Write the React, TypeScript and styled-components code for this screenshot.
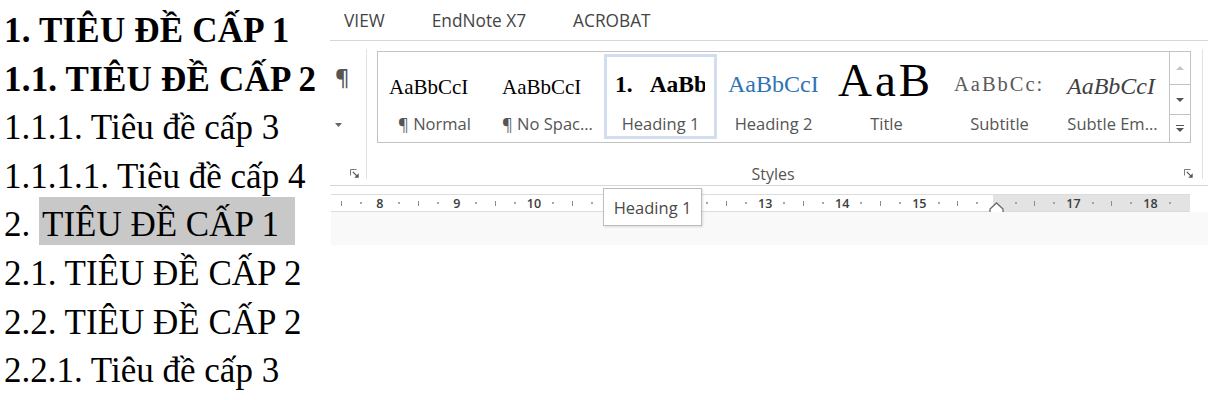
import React from 'react';
import styled, { createGlobalStyle, css } from 'styled-components';

const Global = createGlobalStyle`
  html, body { margin: 0; padding: 0; background: #fff; }
  body { width: 1208px; height: 400px; overflow: hidden; }
`;

const Page = styled.div`
  display: flex;
  align-items: flex-start;
  width: 1208px;
  height: 400px;
`;

/* ---------- document text ---------- */
const Doc = styled.div`
  width: 330px;
  flex: none;
  box-sizing: border-box;
  padding: 7px 0 0 4px;
  font-family: "Liberation Serif", "Times New Roman", serif;
  font-size: 35px;
  line-height: 48.6px;
  color: #000;
`;

const DocLine = styled.div<{ $bold?: boolean }>`
  white-space: nowrap;
  font-weight: ${(p) => (p.$bold ? 700 : 400)};
  letter-spacing: ${(p) => (p.$bold ? '0.2px' : '0')};
`;

const Highlight = styled.span`
  background: #c8c8c8;
  padding: 8px 16px 1px 3px;
`;

/* ---------- ribbon screenshot ---------- */
const Shot = styled.div`
  position: relative;
  width: 878px;
  flex: none;
  display: flex;
  flex-direction: column;
  font-family: "Open Sans", "Segoe UI", sans-serif;
  color: #444;
  background: #fff;
`;

const Tabs = styled.div`
  height: 41px;
  box-sizing: border-box;
  padding: 2px 0 0 14px;
  border-bottom: 1px solid #d6d6d6;
  display: flex;
  align-items: center;
  gap: 47px;
`;

const Tab = styled.span`
  font-size: 17.3px;
  line-height: 22px;
  color: #444;
  white-space: nowrap;
`;

const Ribbon = styled.div`
  height: 145px;
  box-sizing: border-box;
  border-bottom: 1px solid #d6d6d6;
  display: flex;
`;

const ParaGroup = styled.div`
  width: 36px;
  flex: none;
  display: flex;
  flex-direction: column;
`;

const Pilcrow = styled.div`
  height: 70px;
  box-sizing: border-box;
  padding-left: 5px;
  display: flex;
  align-items: center;
  font-size: 22px;
  font-weight: 600;
  color: #555;
  line-height: 1;
`;

const ArrowRow = styled.div`
  height: 28px;
  box-sizing: border-box;
  padding-left: 5px;
  display: flex;
  align-items: center;
`;

const LauncherRow = styled.div`
  box-sizing: border-box;
  padding: 30px 0 0 20px;
  display: flex;
  align-items: flex-start;
`;

const Sep = styled.div`
  width: 1px;
  flex: none;
  margin: 8px 0 6px;
  background: #e2e2e2;
`;

const StylesGroup = styled.div`
  width: 835px;
  flex: none;
  box-sizing: border-box;
  padding: 10px 0 0 10px;
  display: flex;
  flex-direction: column;
`;

const Gallery = styled.div`
  width: 814px;
  height: 92px;
  box-sizing: border-box;
  border: 1px solid #c3c3c3;
  display: flex;
`;

const Items = styled.div`
  display: flex;
  width: 791px;
  flex: none;
`;

const Item = styled.div<{ $selected?: boolean }>`
  width: 113px;
  height: 85px;
  flex: none;
  margin-top: 2px;
  box-sizing: border-box;
  border: 3px solid ${(p) => (p.$selected ? '#d2ddef' : 'transparent')};
  display: flex;
  flex-direction: column;
`;

const PreviewBox = styled.div`
  width: 98px;
  height: 50px;
  margin-top: 4px;
  box-sizing: border-box;
  padding-left: 8px;
  overflow: hidden;
  white-space: nowrap;
  font-family: "Liberation Serif", "Times New Roman", serif;
  font-size: 21px;
  line-height: 50px;
`;

type Variant = 'normal' | 'h1' | 'h2' | 'title' | 'subtitle' | 'subtle';

const variantCss: Record<Variant, ReturnType<typeof css>> = {
  normal: css`
    font-size: 21px;
    color: #000;
    vertical-align: -1px;
  `,
  h1: css`
    font-size: 23.5px;
    font-weight: 700;
    color: #000;
    vertical-align: 1px;
  `,
  h2: css`
    font-size: 24px;
    color: #2e74b5;
    vertical-align: 1px;
  `,
  title: css`
    font-size: 47px;
    letter-spacing: 3px;
    margin-left: -3px;
    color: #000;
    vertical-align: -3px;
  `,
  subtitle: css`
    font-size: 20.5px;
    letter-spacing: 2px;
    color: #5a5a5a;
    vertical-align: 2px;
  `,
  subtle: css`
    font-size: 24px;
    font-style: italic;
    color: #404040;
    vertical-align: -1px;
  `,
};

const Preview = styled.span<{ $v: Variant }>`
  line-height: 0;
  ${(p) => variantCss[p.$v]}
`;

const NumGap = styled.span`
  display: inline-block;
  width: 17px;
`;

const ItemLabel = styled.div`
  margin-top: 2px;
  height: 22px;
  line-height: 22px;
  font-size: 16.5px;
  color: #555;
  text-align: center;
  white-space: nowrap;
  overflow: hidden;
`;

const ScrollCol = styled.div`
  width: 21px;
  flex: none;
  box-sizing: border-box;
  border-left: 1px solid #c3c3c3;
  display: flex;
  flex-direction: column;
`;

const ScrollBtn = styled.div<{ $h: number; $last?: boolean }>`
  height: ${(p) => p.$h}px;
  flex: none;
  box-sizing: border-box;
  border-bottom: ${(p) => (p.$last ? 'none' : '1px solid #c3c3c3')};
  display: flex;
  align-items: center;
  justify-content: center;
`;

const GroupFooter = styled.div`
  display: flex;
  align-items: center;
  height: 42px;
  padding-top: 19px;
  box-sizing: border-box;
`;

const GroupLabel = styled.div`
  width: 792px;
  flex: none;
  text-align: center;
  font-size: 16px;
  line-height: 20px;
  color: #555;
`;

const FooterLauncher = styled.div`
  padding-left: 15px;
  display: flex;
  align-items: center;
`;

/* ---------- ruler ---------- */
const RulerArea = styled.div`
  display: flex;
  flex-direction: column;
  padding-top: 8px;
`;

const RulerBar = styled.div`
  width: 859px;
  height: 18px;
  margin-left: 1px;
  box-sizing: border-box;
  padding-left: 0.7px;
  border-top: 1px solid #dcdcdc;
  border-bottom: 1px solid #dcdcdc;
  background: linear-gradient(to right, #fff 662px, #e3e3e3 662px);
  display: flex;
  align-items: stretch;
`;

const Mark = styled.div<{ $top?: boolean }>`
  width: 19.28px;
  flex: none;
  display: flex;
  justify-content: center;
  align-items: ${(p) => (p.$top ? 'flex-start' : 'center')};
`;

const Tick = styled.span`
  width: 1px;
  height: 5px;
  background: #8c8c8c;
`;

const Dot = styled.span`
  width: 2px;
  height: 2px;
  background: #a6a6a6;
`;

const Num = styled.span`
  font-size: 12.5px;
  line-height: 15px;
  font-weight: 600;
  color: #3c3c3c;
`;

const Marker = styled.svg`
  margin-top: 7px;
  flex: none;
`;

const BelowRuler = styled.div`
  height: 33px;
  margin-left: 1px;
  background: #f9f9f9;
`;

const Tooltip = styled.div`
  position: absolute;
  left: 273px;
  top: 188px;
  width: 99px;
  height: 38px;
  box-sizing: border-box;
  border: 1px solid #bdbdbd;
  background: #fff;
  box-shadow: 1px 1px 2px rgba(0, 0, 0, 0.12);
  display: flex;
  align-items: center;
  justify-content: center;
  font-size: 16.5px;
  color: #4a4a4a;
  white-space: nowrap;
`;

const Launcher = () => (
  <svg width="9" height="9" viewBox="0 0 9 9">
    <path d="M0.5 6.5V0.5H6.5" stroke="#7a7a7a" fill="none" />
    <path d="M2.8 2.8L6.8 6.8" stroke="#555" strokeWidth="1.2" />
    <path d="M8.7 4.3V8.7H4.3Z" fill="#555" />
  </svg>
);

const styles: { label: string; v: Variant; text: string; selected?: boolean }[] = [
  { label: '¶ Normal', v: 'normal', text: 'AaBbCcI' },
  { label: '¶ No Spac...', v: 'normal', text: 'AaBbCcI' },
  { label: 'Heading 1', v: 'h1', text: 'AaBb', selected: true },
  { label: 'Heading 2', v: 'h2', text: 'AaBbCcI' },
  { label: 'Title', v: 'title', text: 'AaB' },
  { label: 'Subtitle', v: 'subtitle', text: 'AaBbCc:' },
  { label: 'Subtle Em...', v: 'subtle', text: 'AaBbCcI' },
];

/* numbers 11 and 12 sit under the tooltip, 16 under the indent marker */
const rulerMarks = Array.from({ length: 44 }, (_, i) => {
  const k = i % 4;
  if (k === 0) return { kind: 'tick' as const };
  if (k === 1 || k === 3) return { kind: 'dot' as const };
  const n = 8 + (i - 2) / 4;
  if (n === 16) return { kind: 'marker' as const };
  if (n === 11 || n === 12) return { kind: 'empty' as const };
  return { kind: 'num' as const, n };
});

export default function App() {
  return (
    <>
      <Global />
      <Page>
        <Doc>
          <DocLine $bold>1. TIÊU ĐỀ CẤP 1</DocLine>
          <DocLine $bold>1.1. TIÊU ĐỀ CẤP 2</DocLine>
          <DocLine>1.1.1. Tiêu đề cấp 3</DocLine>
          <DocLine>1.1.1.1. Tiêu đề cấp 4</DocLine>
          <DocLine>
            2. <Highlight>TIÊU ĐỀ CẤP 1</Highlight>
          </DocLine>
          <DocLine>2.1. TIÊU ĐỀ CẤP 2</DocLine>
          <DocLine>2.2. TIÊU ĐỀ CẤP 2</DocLine>
          <DocLine>2.2.1. Tiêu đề cấp 3</DocLine>
        </Doc>

        <Shot>
          <Tabs>
            <Tab>VIEW</Tab>
            <Tab>EndNote X7</Tab>
            <Tab>ACROBAT</Tab>
          </Tabs>

          <Ribbon>
            <ParaGroup>
              <Pilcrow>¶</Pilcrow>
              <ArrowRow>
                <svg width="7" height="4" viewBox="0 0 7 4">
                  <path d="M0 0H7L3.5 4Z" fill="#666" />
                </svg>
              </ArrowRow>
              <LauncherRow>
                <Launcher />
              </LauncherRow>
            </ParaGroup>
            <Sep />
            <StylesGroup>
              <Gallery>
                <Items>
                  {styles.map((s) => (
                    <Item key={s.label} $selected={s.selected}>
                      <PreviewBox>
                        <Preview $v={s.v}>
                          {s.v === 'h1' ? (
                            <>
                              1.<NumGap />
                              {s.text}
                            </>
                          ) : (
                            s.text
                          )}
                        </Preview>
                      </PreviewBox>
                      <ItemLabel>{s.label}</ItemLabel>
                    </Item>
                  ))}
                </Items>
                <ScrollCol>
                  <ScrollBtn $h={33}>
                    <svg width="8" height="4" viewBox="0 0 8 4">
                      <path d="M0 4H8L4 0Z" fill="#c6c6c6" />
                    </svg>
                  </ScrollBtn>
                  <ScrollBtn $h={30}>
                    <svg width="8" height="4" viewBox="0 0 8 4">
                      <path d="M0 0H8L4 4Z" fill="#555" />
                    </svg>
                  </ScrollBtn>
                  <ScrollBtn $h={27} $last>
                    <svg width="8" height="7" viewBox="0 0 8 7">
                      <rect x="0" y="0" width="8" height="1" fill="#555" />
                      <path d="M0 3H8L4 7Z" fill="#555" />
                    </svg>
                  </ScrollBtn>
                </ScrollCol>
              </Gallery>
              <GroupFooter>
                <GroupLabel>Styles</GroupLabel>
                <FooterLauncher>
                  <Launcher />
                </FooterLauncher>
              </GroupFooter>
            </StylesGroup>
            <Sep />
          </Ribbon>

          <RulerArea>
            <RulerBar>
              {rulerMarks.map((m, i) => (
                <Mark key={i} $top={m.kind === 'marker'}>
                  {m.kind === 'tick' && <Tick />}
                  {m.kind === 'dot' && <Dot />}
                  {m.kind === 'num' && <Num>{m.n}</Num>}
                  {m.kind === 'marker' && (
                    <Marker width="15" height="13" viewBox="0 0 15 13">
                      <path d="M1 12.5V7L7.5 1L14 7V12.5Z" fill="#fff" stroke="#6a6a6a" strokeWidth="1.3" />
                    </Marker>
                  )}
                </Mark>
              ))}
            </RulerBar>
            <BelowRuler />
          </RulerArea>

          <Tooltip>Heading 1</Tooltip>
        </Shot>
      </Page>
    </>
  );
}
